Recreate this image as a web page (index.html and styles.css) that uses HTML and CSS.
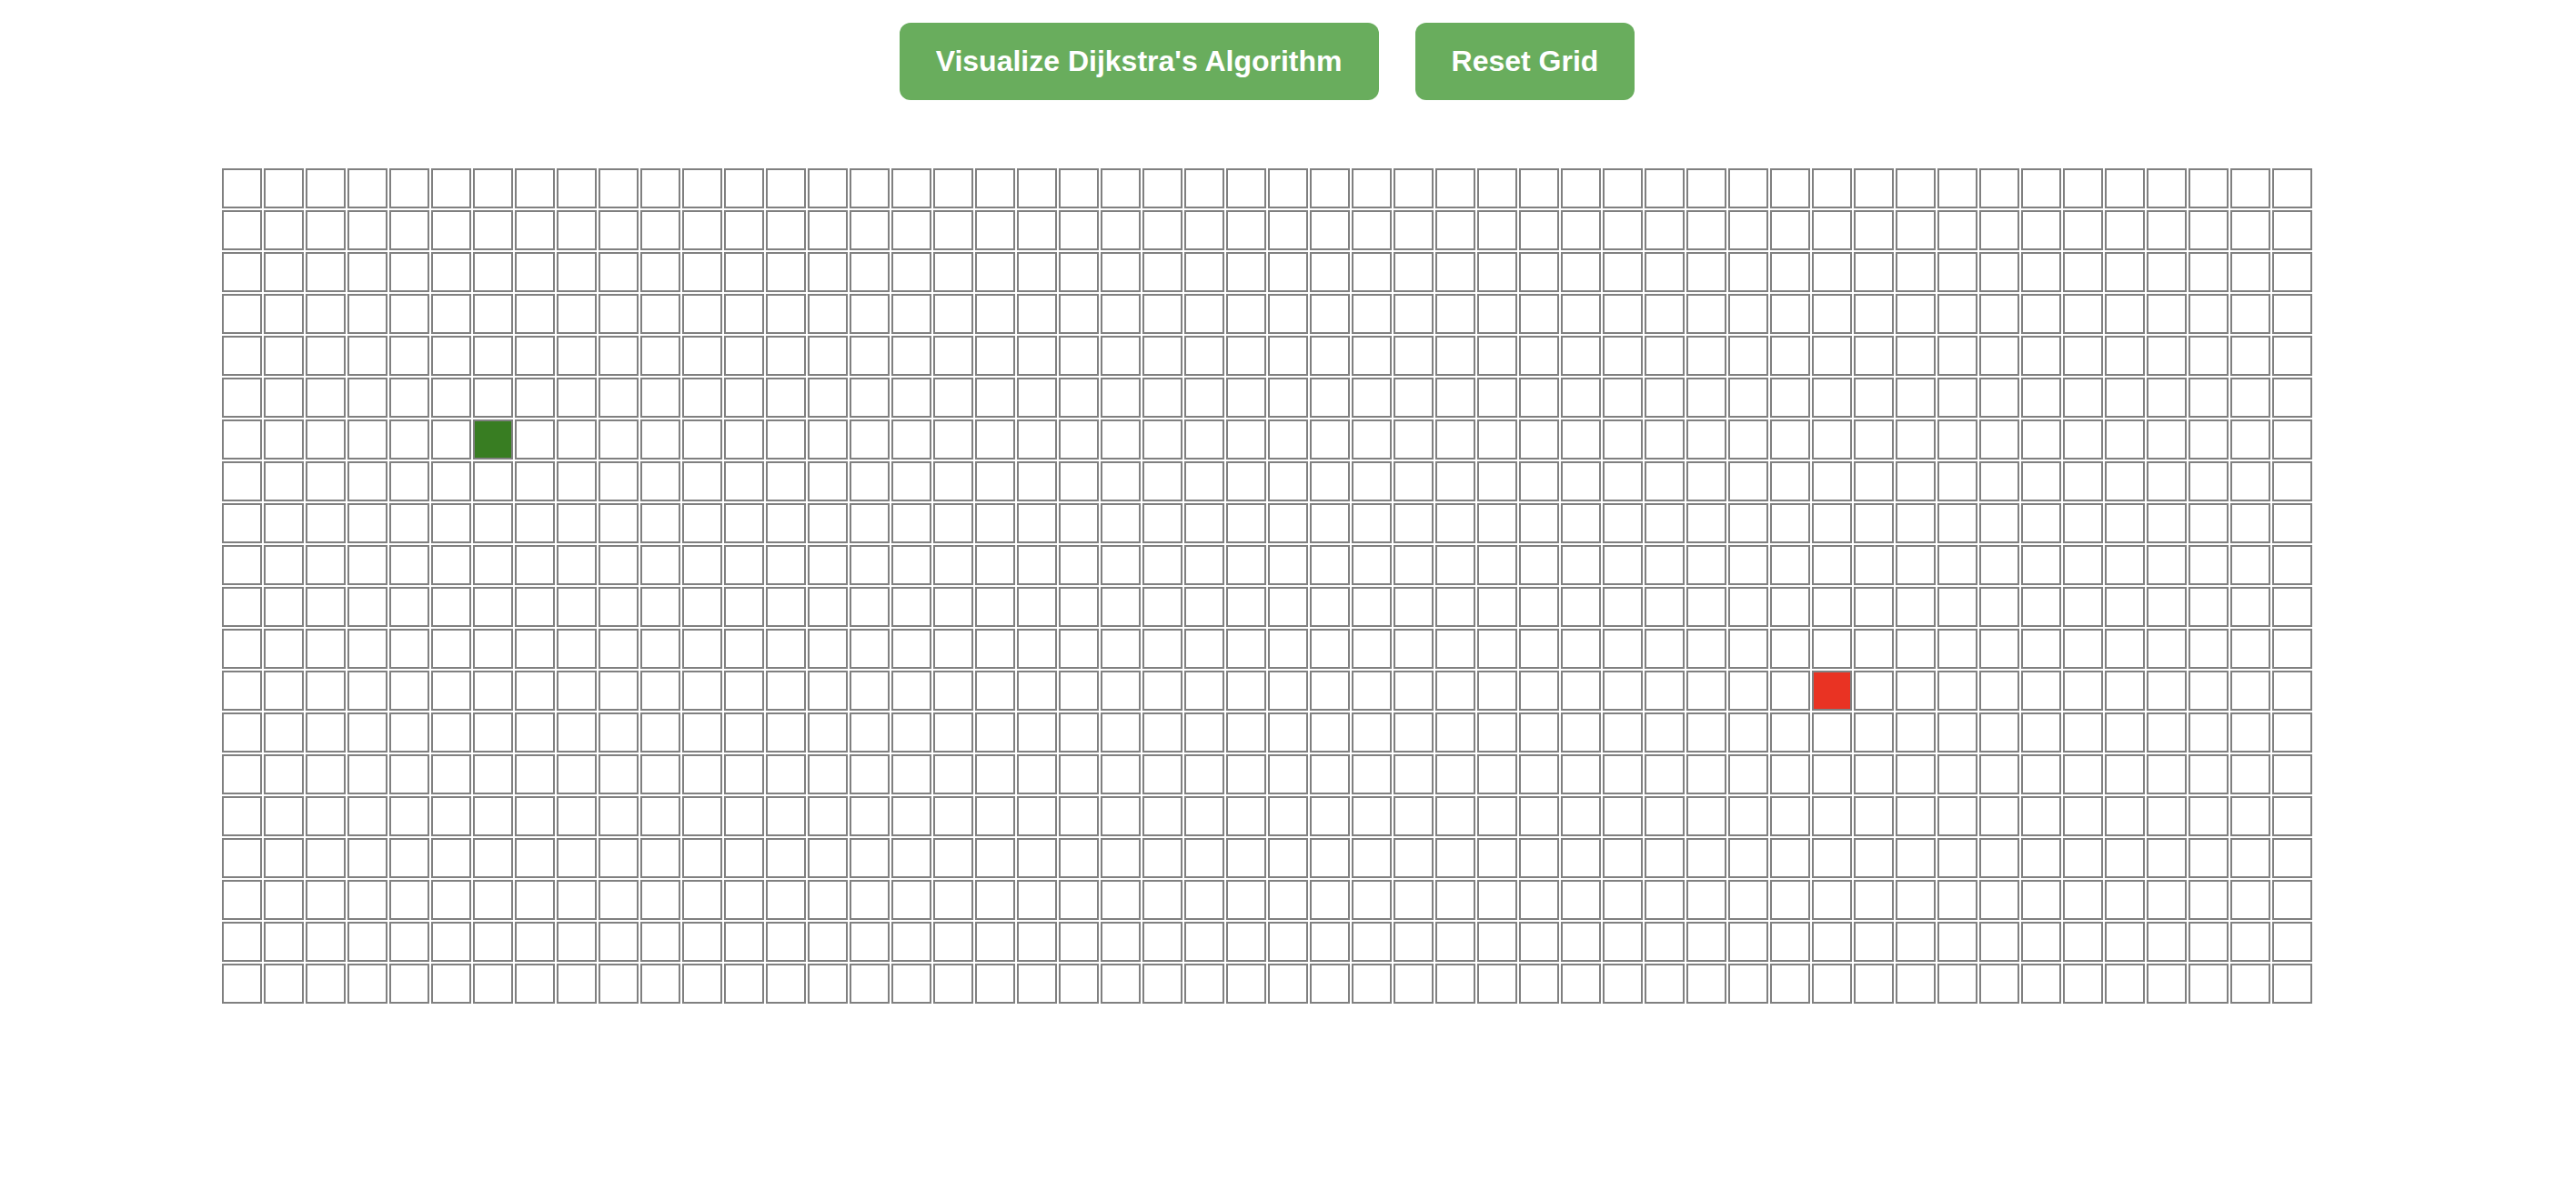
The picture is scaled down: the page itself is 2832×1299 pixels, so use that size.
FILE: index.html
```html
<!DOCTYPE html>
<html>
<head>
<meta charset="utf-8">
<title>Dijkstra Visualizer</title>
<link rel="stylesheet" href="styles.css">
</head>
<body>
<div class="app">
  <div class="controls">
    <button class="btn">Visualize Dijkstra's Algorithm</button>
    <button class="btn">Reset Grid</button>
  </div>
  <div class="grid" id="grid"></div>
</div>
<script src="script.js"></script>
</body>
</html>
```
FILE: styles.css
```css
body {
  margin: 8px;
  background: #ffffff;
  font-family: "Liberation Sans", Arial, sans-serif;
}
.app {
  width: 2770px;
  display: flex;
  flex-direction: column;
  align-items: center;
}
.controls {
  display: flex;
  gap: 40px;
  margin-top: 17px;
}
.btn {
  font-family: "Liberation Sans", Arial, sans-serif;
  font-size: 32px;
  font-weight: bold;
  color: #ffffff;
  background: #69ad5d;
  border: none;
  border-radius: 12px;
  height: 85px;
  padding: 0 40px;
  cursor: pointer;
}
.grid {
  display: grid;
  grid-template-columns: repeat(50, 46px);
  grid-auto-rows: 46px;
  margin-top: 74px;
}
.cell {
  width: 40px;
  height: 40px;
  margin: 1px;
  border: 2px solid #808080;
  background: #ffffff;
}
.cell.start {
  background: #387d22;
}
.cell.end {
  background: #e93323;
}
```
FILE: script.js
```js
var grid = document.getElementById('grid');
for (var r = 0; r < 20; r++) {
  for (var c = 0; c < 50; c++) {
    var d = document.createElement('div');
    d.className = 'cell';
    if (r === 6 && c === 6) d.className += ' start';
    if (r === 12 && c === 38) d.className += ' end';
    grid.appendChild(d);
  }
}
```
